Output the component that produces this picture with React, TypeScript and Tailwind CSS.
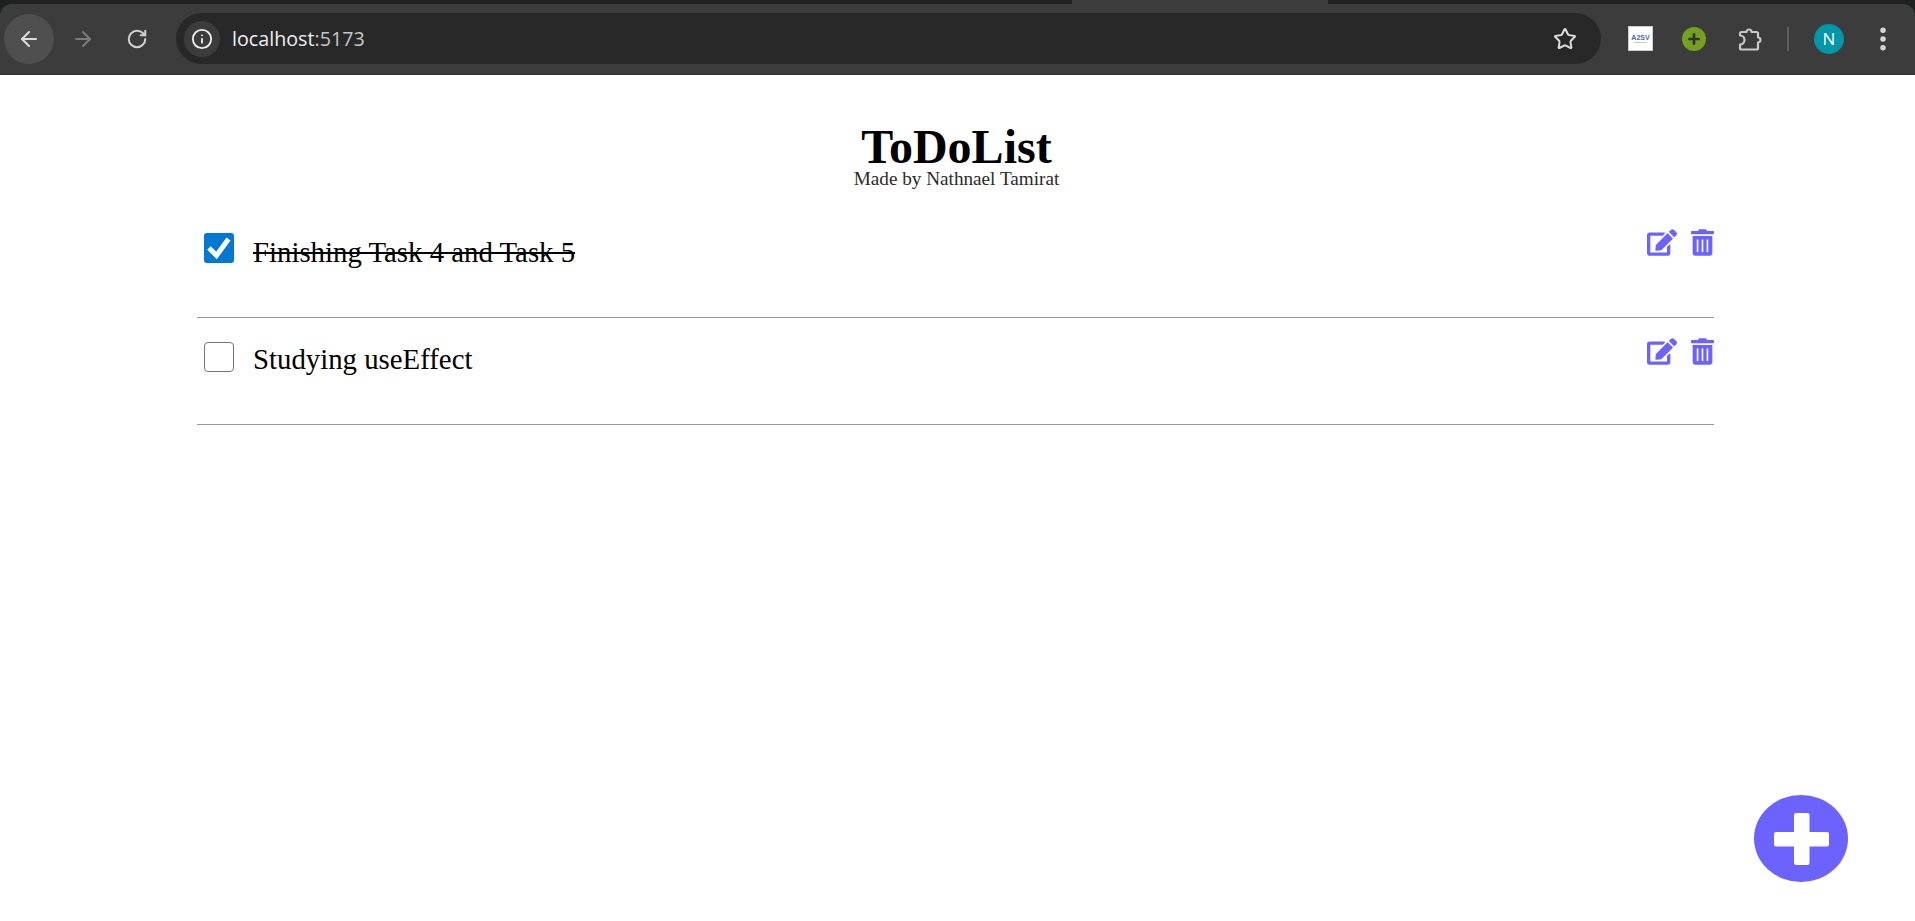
import { ArrowLeft, ArrowRight, RotateCw, Info, Star, EllipsisVertical, Plus } from "lucide-react";
import { FaEdit, FaTrashAlt } from "react-icons/fa";

function Task({ text, done }: { text: string; done?: boolean }) {
  return (
    <div className="flex h-[107px] border-b border-[#999999]">
      <div className="flex flex-1 items-start pl-[7px] pt-[24px]">
        {done ? (
          <div className="-mt-[2px] h-[30px] w-[30px] rounded-[3px] bg-[#0078d4]">
            <svg className="h-[30px] w-[30px]" viewBox="0 0 30 30" fill="none" stroke="white" strokeWidth="5">
              <path d="M5 15l7.5 7.5L24.5 6" />
            </svg>
          </div>
        ) : (
          <div className="h-[30px] w-[30px] rounded-[4px] border-[1.5px] border-[#767676] bg-white" />
        )}
        <span className={`-mt-[1px] ml-[19px] text-[28.8px] leading-[36px] text-black ${done ? "line-through decoration-2" : ""}`}>{text}</span>
      </div>
      <div className={`flex items-start gap-[14px] text-[#6c63ff] ${done ? "pt-[18px]" : "pt-[20px]"}`}>
        <FaEdit className="h-[27px] w-[30px]" />
        <FaTrashAlt className="h-[27px] w-[23px]" />
      </div>
    </div>
  );
}

export default function App() {
  return (
    <div className="relative h-[921px] w-full overflow-hidden bg-white font-['Liberation_Serif',serif]">
      <header className="h-[75px] bg-[#1f2120] font-['Open_Sans',sans-serif]">
        <div className="flex h-[4px]">
          <div className="ml-[1072px] w-[256px] bg-[#3c3c3c]" />
        </div>
        <div className="flex h-[71px] items-center rounded-t-[12px] border-b border-[#333333] bg-[#3c3c3c] pl-[4px] pb-[1px]">
          <div className="flex h-[50px] w-[50px] items-center justify-center rounded-full bg-[#4f4f4f]">
            <ArrowLeft className="h-[24px] w-[24px] text-[#dcdcdc]" strokeWidth={2} />
          </div>
          <div className="ml-[4px] flex h-[50px] w-[50px] items-center justify-center">
            <ArrowRight className="h-[24px] w-[24px] text-[#7b7b7b]" strokeWidth={2} />
          </div>
          <div className="ml-[4px] flex h-[50px] w-[50px] items-center justify-center">
            <RotateCw className="h-[22px] w-[22px] text-[#d0d0d0]" strokeWidth={2.2} />
          </div>
          <div className="ml-[14px] flex h-[51px] w-[1425px] items-center rounded-full bg-[#282828] pl-[8px] pr-[24px]">
            <div className="flex h-[36px] w-[36px] items-center justify-center rounded-full bg-[#3c3c3c]">
              <Info className="h-[22px] w-[22px] text-[#eeeeee]" strokeWidth={2} />
            </div>
            <span className="ml-[12px] flex-1 text-[19.7px] text-[#f0f0f0]">
              localhost<span className="text-[#c4c7c5]">:5173</span>
            </span>
            <Star className="h-[24px] w-[24px] text-[#dddddd]" strokeWidth={2} />
          </div>
          <div className="ml-[27px] flex h-[25px] w-[25px] flex-col items-center justify-center gap-[1px] border border-[#cccccc] bg-white font-['Liberation_Sans',sans-serif] text-[7px] font-bold leading-[7px] text-[#4a66a8]">
            A2SV
            <div className="h-[1px] w-[13px] bg-[#c4c8d4]" />
          </div>
          <div className="ml-[29px] flex h-[24px] w-[24px] items-center justify-center rounded-full bg-[#76a01f]">
            <Plus className="h-[16px] w-[16px] text-[#333333]" strokeWidth={4} />
          </div>
          <svg className="ml-[32px] h-[24px] w-[24px] text-[#c8c8c8]" viewBox="0 0 24 24" fill="none" stroke="currentColor" strokeWidth="2.2" strokeLinejoin="round">
            <path d="M2 6.5a1.5 1.5 0 0 1 1.5-1.5H8.5a2.5 2.5 0 0 1 5 0H18.5a1.5 1.5 0 0 1 1.5 1.5V10.5a2.5 2.5 0 0 1 0 5V21a1.5 1.5 0 0 1-1.5 1.5H3.5A1.5 1.5 0 0 1 2 21V17.5a4.5 4.5 0 0 0 0-9V6.5z" />
          </svg>
          <div className="ml-[25px] h-[24px] w-[2px] bg-[#5e5e5e]" />
          <div className="ml-[25px] flex h-[30px] w-[30px] items-center justify-center rounded-full bg-[#0097a7] text-[17px] text-white">
            N
          </div>
          <EllipsisVertical className="ml-[24px] h-[30px] w-[30px] text-[#d8d8d8]" strokeWidth={2.4} />
        </div>
      </header>

      <div className="mt-[51px] pr-[2px] text-center">
        <h1 className="text-[48px] font-bold leading-[42px] text-black">ToDoList</h1>
        <p className="mt-[1px] text-[19.2px] leading-[19px] text-[#2a2a2a]">Made by Nathnael Tamirat</p>
      </div>

      <div className="ml-[197px] mt-[23px] w-[1517px]">
        <Task text="Finishing Task 4 and Task 5" done />
        <Task text="Studying useEffect" />
      </div>

      <button className="absolute left-[1754px] top-[795px] flex h-[87px] w-[94px] items-center justify-center rounded-[50%] bg-[#6c63ff]">
        <svg className="h-[52px] w-[55px]" viewBox="0 0 55 52" fill="white">
          <rect x="20" y="0" width="15.5" height="52" rx="2" />
          <rect x="0" y="19" width="55" height="14.5" rx="2" />
        </svg>
      </button>
    </div>
  );
}
